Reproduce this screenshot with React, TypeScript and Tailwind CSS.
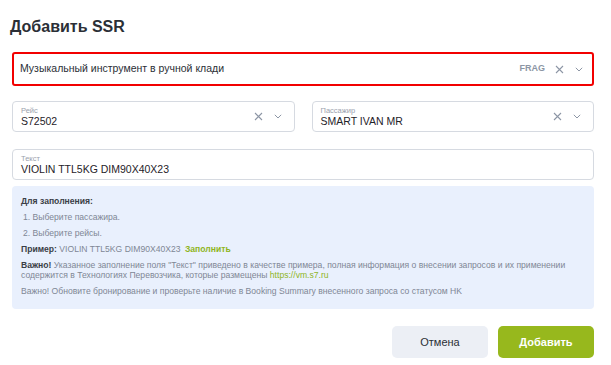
import React from 'react';

function ClearIcon() {
  return (
    <svg width="9" height="9" viewBox="0 0 9 9" className="text-[#8d96a5]">
      <path d="M1 1L8 8M8 1L1 8" stroke="currentColor" strokeWidth="1.1" fill="none" />
    </svg>
  );
}

function ChevronIcon() {
  return (
    <svg width="8" height="5" viewBox="0 0 8 5" className="text-[#8d96a5]">
      <path d="M0.8 0.8L4 4L7.2 0.8" stroke="currentColor" strokeWidth="1" fill="none" />
    </svg>
  );
}

function SelectField({ label, value }: { label: string; value: string }) {
  return (
    <div className="h-[31px] border border-[#d6dae1] rounded-[4px] flex items-center pl-2 pr-[12px]">
      <div className="flex-1 flex flex-col">
        <span className="text-[7.5px] leading-[9px] text-[#9aa1ad]">{label}</span>
        <span className="text-[10.5px] leading-[13px] text-[#1f2229]">{value}</span>
      </div>
      <div className="flex items-center gap-[11px]">
        <ClearIcon />
        <ChevronIcon />
      </div>
    </div>
  );
}

export default function App() {
  return (
    <div className="w-[611px] h-[365px] bg-white pl-3 pr-[17px] pt-[17px] font-['Liberation_Sans',Arial,sans-serif]">
      <h2 className="text-[16px] leading-5 font-bold text-[#2b2f36] -ml-[2px]">Добавить SSR</h2>

      {/* SSR type */}
      <div className="mt-[15px] h-[34px] border-2 border-[#f20000] rounded-[3px] flex items-center pl-[6px] pr-[9px]">
        <span className="flex-1 text-[10.5px] text-[#2b2f36]">Музыкальный инструмент в ручной клади</span>
        <div className="flex items-center gap-[11px]">
          <span className="text-[9px] font-bold text-[#8d96a5] -mr-[1px]">FRAG</span>
          <ClearIcon />
          <ChevronIcon />
        </div>
      </div>

      <div className="mt-[15px] grid grid-cols-2 gap-x-[17px]">
        <SelectField label="Рейс" value="S72502" />
        <SelectField label="Пассажир" value="SMART IVAN MR" />
      </div>

      <div className="mt-[17px] h-[31px] border border-[#d6dae1] rounded-[4px] flex flex-col justify-center pl-2">
        <span className="text-[7.5px] leading-[9px] text-[#9aa1ad]">Текст</span>
        <span className="text-[10.5px] leading-[13px] text-[#1f2229]">VIOLIN TTL5KG DIM90X40X23</span>
      </div>

      {/* Hints */}
      <div className="mt-[6px] h-[123px] bg-[#e9f0fd] rounded-[4px] px-[9px] pt-[10px] text-[8.6px] leading-[10px] text-[#7f8795]">
        <p className="font-bold text-[#3a3e46]">Для заполнения:</p>
        <p className="mt-[6px] pl-[2px]">1. Выберите пассажира.</p>
        <p className="mt-[6px] pl-[2px]">2. Выберите рейсы.</p>
        <p className="mt-[6px]">
          <span className="font-bold text-[#3a3e46]">Пример:</span> VIOLIN TTL5KG DIM90X40X23{' '}
          <span className="ml-[2px] font-bold text-[#8fb51d]">Заполнить</span>
        </p>
        <p className="mt-[6px]">
          <span className="font-bold text-[#3a3e46]">Важно!</span> Указанное заполнение поля "Текст" приведено в качестве примера, полная информация о внесении запросов и их применении содержится в Технологиях Перевозчика, которые размещены{' '}
          <span className="text-[#8fb51d]">https://vm.s7.ru</span>
        </p>
        <p className="mt-[6px]">Важно! Обновите бронирование и проверьте наличие в Booking Summary внесенного запроса со статусом HK</p>
      </div>

      <div className="mt-[17px] flex justify-end gap-[10px]">
        <button className="w-[96px] h-[32px] rounded-[5px] bg-[#eceff5] text-[11px] text-[#2b2f36]">Отмена</button>
        <button className="w-[96px] h-[32px] rounded-[5px] bg-[#97b81d] text-[11px] font-bold text-white">Добавить</button>
      </div>
    </div>
  );
}
